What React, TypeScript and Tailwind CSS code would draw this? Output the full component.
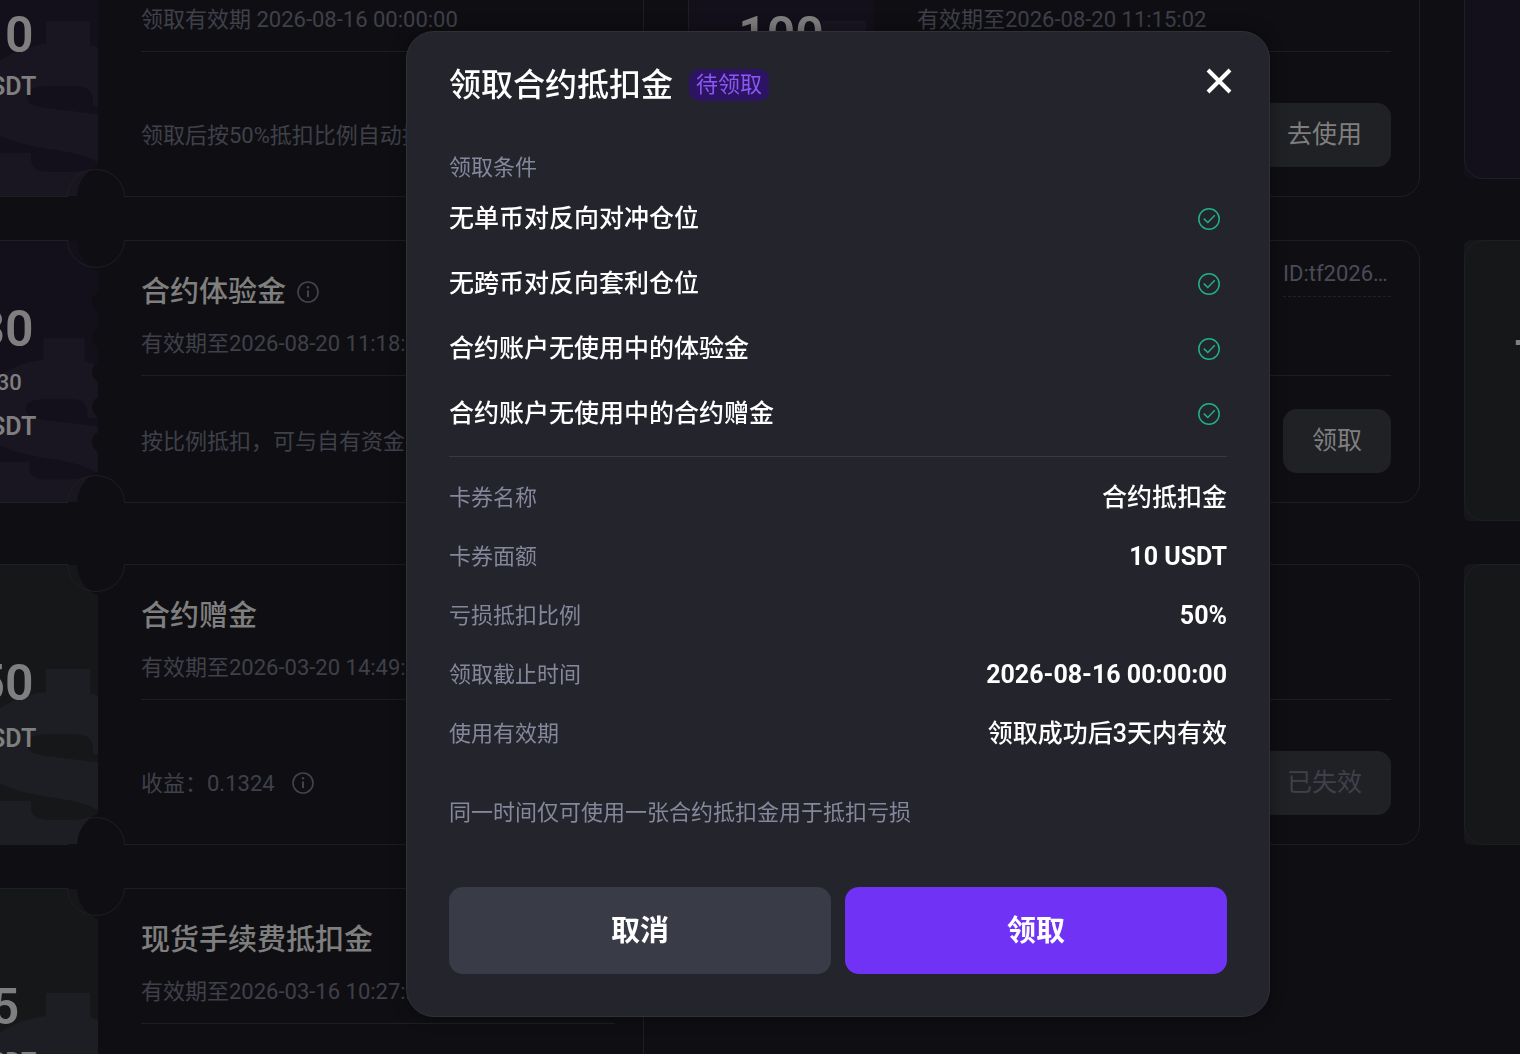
import { clsx } from "clsx";
import { type ReactElement, type ReactNode, useState } from "react";

interface Coupon {
  id: string;
  amount: string;
  total?: string;
  tone: "purple" | "gray";
  title: string;
  period: string;
  note: string;
  noteInfo?: boolean;
  titleInfo?: boolean;
  shortId?: string;
  action: string;
  disabled?: boolean;
  compact?: boolean;
}

const COUPONS: readonly Coupon[] = [
  {
    id: "deduct-10",
    amount: "10",
    tone: "purple",
    title: "合约抵扣金",
    period: "领取有效期 2026-08-16 00:00:00",
    note: "领取后按50%抵扣比例自动抵扣",
    action: "领取",
  },
  {
    id: "deduct-100",
    amount: "100",
    tone: "purple",
    title: "合约抵扣金",
    period: "有效期至2026-08-20 11:15:02",
    note: "按比例自动抵扣",
    action: "去使用",
  },
  {
    id: "trial-20",
    amount: "20",
    tone: "purple",
    title: "合约体验金",
    period: "有效期至2026-08-20 11:15:02",
    note: "按比例抵扣",
    action: "去使用",
    compact: true,
  },
  {
    id: "trial-30",
    amount: "30",
    total: "/30",
    tone: "purple",
    title: "合约体验金",
    titleInfo: true,
    period: "有效期至2026-08-20 11:18:42",
    note: "按比例抵扣，可与自有资金共用",
    action: "领取",
    compact: true,
  },
  {
    id: "trial-50",
    amount: "50",
    tone: "purple",
    title: "合约体验金",
    period: "有效期至2026-08-20 11:18:42",
    note: "按比例抵扣",
    shortId: "ID:tf202608201118",
    action: "领取",
    compact: true,
  },
  {
    id: "bonus-700",
    amount: "700",
    tone: "gray",
    title: "合约赠金",
    period: "有效期至2026-03-20 14:49:12",
    note: "收益：0",
    action: "已失效",
    disabled: true,
  },
  {
    id: "bonus-50",
    amount: "50",
    tone: "gray",
    title: "合约赠金",
    period: "有效期至2026-03-20 14:49:12",
    note: "收益：0.1324",
    noteInfo: true,
    action: "已失效",
    disabled: true,
  },
  {
    id: "bonus-5",
    amount: "5",
    tone: "gray",
    title: "合约赠金",
    period: "有效期至2026-03-20 14:49:12",
    note: "收益：0",
    action: "已失效",
    disabled: true,
  },
  {
    id: "bonus-8",
    amount: "8",
    tone: "gray",
    title: "合约赠金",
    period: "有效期至2026-03-20 14:49:12",
    note: "收益：0",
    action: "已失效",
    disabled: true,
  },
  {
    id: "spot-5",
    amount: "5",
    tone: "gray",
    title: "现货手续费抵扣金",
    period: "有效期至2026-03-16 10:27:25",
    note: "现货手续费抵扣",
    action: "已失效",
    disabled: true,
  },
];

const CONDITIONS: readonly string[] = [
  "无单币对反向对冲仓位",
  "无跨币对反向套利仓位",
  "合约账户无使用中的体验金",
  "合约账户无使用中的合约赠金",
];

const DETAILS: readonly { label: string; value: string; numeric?: boolean }[] = [
  { label: "卡券名称", value: "合约抵扣金" },
  { label: "卡券面额", value: "10 USDT", numeric: true },
  { label: "亏损抵扣比例", value: "50%", numeric: true },
  { label: "领取截止时间", value: "2026-08-16 00:00:00", numeric: true },
  { label: "使用有效期", value: "领取成功后3天内有效" },
];

const SCALLOPS: readonly number[] = [62, 97, 132, 167, 202];

function InfoIcon(): ReactElement {
  return (
    <svg className="size-6 text-[#42434e]" viewBox="0 0 24 24" fill="none" aria-hidden>
      <circle cx="12" cy="12" r="10" stroke="currentColor" strokeWidth="1.6" />
      <circle cx="12" cy="7.2" r="1.2" fill="currentColor" />
      <path d="M12 10.6v6.4" stroke="currentColor" strokeWidth="2" />
    </svg>
  );
}

function CheckIcon(): ReactElement {
  return (
    <svg className="size-6 text-[#20b281]" viewBox="0 0 24 24" fill="none" aria-hidden>
      <circle cx="12" cy="12" r="10.2" stroke="currentColor" strokeWidth="1.5" />
      <path d="m6.8 11.6 4 3.9 7-7.2" stroke="currentColor" strokeWidth="1.5" />
    </svg>
  );
}

function Notch({ side }: { side: "top" | "bottom" }): ReactElement {
  return (
    <svg
      className={clsx(
        "absolute left-[155px] h-9 w-[58px]",
        side === "top" ? "top-0" : "bottom-0 -scale-y-100",
      )}
      viewBox="0 0 58 36"
      fill="none"
      aria-hidden
    >
      <path d="M1 0h56v1H1z" fill="#0f0f13" />
      <circle cx="44" cy="0" r="34" fill="#0f0f13" />
      <path d="M.5 0a28.5 27.5 0 0 0 57 0" stroke="#1e1f23" />
    </svg>
  );
}

function StubArt({ tone }: { tone: Coupon["tone"] }): ReactElement {
  return (
    <svg
      className={clsx(
        "absolute inset-0 size-full",
        tone === "purple" ? "text-[#191622]" : "text-[#1d1e23]",
      )}
      viewBox="0 0 186 281"
      fill="currentColor"
      aria-hidden
    >
      <path d="M62 185C62 155 100 131 134 128V105H178V129L192 134V190H181V184Q181 170 162 170H138Q115 170 115 181Q115 190 135 192L192 199V250Q180 240 150 235C115 230 62 222 62 185Z" />
      <path d="M62 237H119V243Q119 256 138 256H160Q180 255 192 247V281H62Z" />
    </svg>
  );
}

function CouponCard({ coupon }: { coupon: Coupon }): ReactElement {
  return (
    <article className="relative flex self-start">
      <div
        className={clsx(
          "relative flex w-[186px] flex-none flex-col items-center justify-center overflow-hidden rounded-l-md font-semibold text-[#7f7f7f]",
          coupon.tone === "purple" ? "bg-[#14101b]" : "bg-[#161718]",
          coupon.tone === "purple" && !coupon.compact && "pb-1",
        )}
      >
        <StubArt tone={coupon.tone} />
        <div className="relative text-[50px] leading-14">{coupon.amount}</div>
        {coupon.total !== undefined && (
          <div className="relative mt-2.5 text-[22px] leading-8 font-medium">{coupon.total}</div>
        )}
        <div
          className={clsx(
            "relative text-[25px] leading-8",
            coupon.tone === "purple" && !coupon.compact ? "mt-2" : "mt-3",
          )}
        >
          USDT
        </div>
        {coupon.compact && (
          <svg className="absolute right-0 h-full w-2" viewBox="0 0 8 263" aria-hidden>
            {SCALLOPS.map((y) => (
              <circle key={y} cx="13" cy={y} r="11" fill="#0f0f13" />
            ))}
          </svg>
        )}
      </div>

      <div className="min-w-0 flex-1 pt-8 pr-[29px] pb-[30px] pl-[43px]">
        <div className="flex h-10 items-center gap-2.5">
          <h2 className="pt-0.5 text-[29px] font-medium text-[#7f7f7f]">{coupon.title}</h2>
          {coupon.titleInfo && <InfoIcon />}
          {coupon.shortId !== undefined && (
            <a
              href="#detail"
              className="mb-auto ml-auto -mt-4 w-27 truncate border-b border-dashed border-[#202126] pb-1 text-[22px] leading-9 text-[#4a4b57]"
            >
              {coupon.shortId}
            </a>
          )}
        </div>
        <p className="mt-4 text-[22px] leading-8 text-[#3f404a]">{coupon.period}</p>
        <div
          className={clsx(
            "mt-[15px] flex items-center justify-between border-t border-[#1e1f23]",
            coupon.compact ? "pt-[33px]" : "pt-[51px]",
          )}
        >
          <p className="flex items-center gap-4 text-[22px] text-[#3f404a]">
            {coupon.note}
            {coupon.noteInfo && <InfoIcon />}
          </p>
          <button
            type="button"
            disabled={coupon.disabled}
            className={clsx(
              "h-16 flex-none rounded-[14px] bg-[#202125] px-[29px] text-[25px]",
              coupon.disabled ? "text-[#3f404a]" : "text-[#7f7f7f]",
            )}
          >
            {coupon.action}
          </button>
        </div>
      </div>

      <div className="pointer-events-none absolute inset-0 rounded-[20px] border border-[#1e1f23]" />
      <Notch side="top" />
      <Notch side="bottom" />
    </article>
  );
}

function DialogButton({
  className,
  onClick,
  children,
}: {
  className: string;
  onClick: () => void;
  children: ReactNode;
}): ReactElement {
  return (
    <button
      type="button"
      onClick={onClick}
      className={clsx("h-[87px] flex-1 rounded-[14px] pt-0.5 text-[29px] font-bold", className)}
    >
      {children}
    </button>
  );
}

function ClaimDialog({ onClose }: { onClose: () => void }): ReactElement {
  return (
    <div className="fixed inset-0 flex items-start justify-center overflow-y-auto pt-[31px] pl-39">
      <section
        role="dialog"
        aria-modal="true"
        aria-labelledby="claim-title"
        className="w-full max-w-[864px] rounded-[28px] border border-[#303138] bg-[#24242d] px-[42px] pt-7 pb-[42px] text-white shadow-[0_0_16px_rgba(0,0,0,0.4)]"
      >
        <header className="flex h-[50px] items-center">
          <h1 id="claim-title" className="text-[32px] font-medium">
            领取合约抵扣金
          </h1>
          <span className="ml-4 rounded-[10px] bg-[#2c1463] px-[7px] text-[22px] leading-8 text-[#8b58f5]">
            待领取
          </span>
          <button type="button" aria-label="关闭" onClick={onClose} className="-mr-2 mb-2 ml-auto">
            <svg className="size-8" viewBox="0 0 32 32" fill="none" aria-hidden>
              <path d="m5 5 22 22M27 5 5 27" stroke="currentColor" strokeWidth="4" />
            </svg>
          </button>
        </header>

        <h2 className="mt-[42px] text-[22px] leading-8 text-[#85879b]">领取条件</h2>
        <ul className="mt-0.5">
          {CONDITIONS.map((condition) => (
            <li
              key={condition}
              className="flex h-[65px] items-center justify-between pr-1.5 text-[25px] font-medium"
            >
              {condition}
              <CheckIcon />
            </li>
          ))}
        </ul>

        <dl className="mt-2.5 border-t border-[#383941] pt-[11px]">
          {DETAILS.map((item) => (
            <div key={item.label} className="flex h-[59px] items-center justify-between">
              <dt className="text-[22px] text-[#85879b]">{item.label}</dt>
              <dd className={clsx("text-[25px]", item.numeric ? "font-bold" : "font-medium")}>
                {item.value}
              </dd>
            </div>
          ))}
        </dl>

        <p className="mt-[34px] text-[22px] leading-8 text-[#85879b]">
          同一时间仅可使用一张合约抵扣金用于抵扣亏损
        </p>

        <footer className="mt-[58px] flex gap-3.5">
          <DialogButton className="bg-[#393b46]" onClick={onClose}>
            取消
          </DialogButton>
          <DialogButton className="bg-[#7033f5]" onClick={onClose}>
            领取
          </DialogButton>
        </footer>
      </section>
    </div>
  );
}

export default function App(): ReactElement {
  const [open, setOpen] = useState<boolean>(true);

  return (
    <div
      lang="zh-CN"
      className="h-screen overflow-hidden bg-[#0f0f13] font-['Roboto','Noto_Sans_CJK_SC',sans-serif]"
    >
      <main className="-mt-[84px] -ml-[88px] grid w-[calc(150%+4px)] grid-cols-3 gap-x-11 gap-y-[43px]">
        {COUPONS.map((coupon) => (
          <CouponCard key={coupon.id} coupon={coupon} />
        ))}
      </main>
      {open && (
        <ClaimDialog
          onClose={() => {
            setOpen(false);
          }}
        />
      )}
    </div>
  );
}
